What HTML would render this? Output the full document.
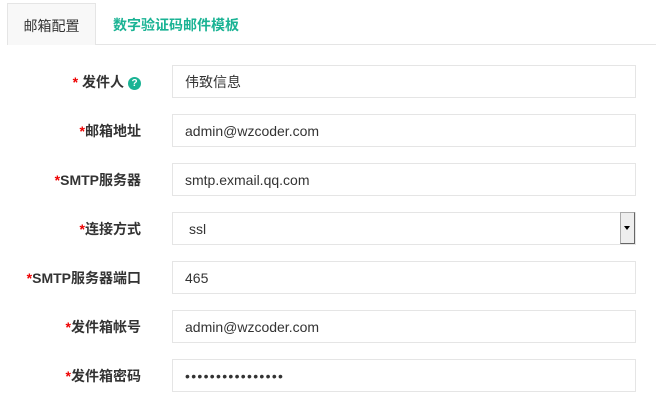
<!DOCTYPE html>
<html><head><meta charset="utf-8"><style>
body{margin:0;width:656px;height:404px;background:#fff;font-family:"Liberation Sans","Noto Sans CJK SC",sans-serif;position:relative;overflow:hidden}
.tabline{position:absolute;left:7px;right:0;top:44px;height:1px;background:#e5e5e5}
.tab1{position:absolute;left:7px;top:3px;width:87px;height:41px;border:1px solid #e5e5e5;border-bottom:none;background:#f8f8f8;font-size:14px;color:#333;line-height:44px;text-align:center}
.tab2{position:absolute;left:113px;top:3px;height:41px;line-height:44px;font-size:14px;color:#1ab394;font-weight:bold}
.lab{position:absolute;right:515px;font-size:14px;font-weight:bold;color:#333;line-height:35px;white-space:nowrap}
.lab i{color:#e00;font-style:normal}
.inp{position:absolute;left:172px;height:31px;border:1px solid #e5e5e5;font-size:14px;color:#333;line-height:33px;padding-left:12px;width:450px}
.q{display:inline-block;width:13px;height:13px;border-radius:50%;background:#1ab394;color:#fff;font-size:10px;line-height:13px;text-align:center;vertical-align:1px;margin-left:4px}
.arr{position:absolute;left:620px;top:212px;width:13px;height:30px;background:#eee;border:1px solid #aaa;border-right-color:#666;border-bottom-color:#666}
.arr:after{content:"";position:absolute;left:3px;top:13px;border-left:3px solid transparent;border-right:3px solid transparent;border-top:4px solid #000}
</style></head><body>
<div class="tabline"></div>
<div class="tab1">邮箱配置</div>
<div class="tab2">数字验证码邮件模板</div>

<div class="lab" style="top:65px"><i>*</i> 发件人<span class="q">?</span></div>
<div class="inp" style="top:65px">伟致信息</div>
<div class="lab" style="top:114px"><i>*</i>邮箱地址</div>
<div class="inp" style="top:114px">admin@wzcoder.com</div>
<div class="lab" style="top:163px"><i>*</i>SMTP服务器</div>
<div class="inp" style="top:163px">smtp.exmail.qq.com</div>
<div class="lab" style="top:212px"><i>*</i>连接方式</div>
<div class="inp" style="top:212px;padding-left:16px;width:446px">ssl</div>
<div class="arr"></div>
<div class="lab" style="top:261px"><i>*</i>SMTP服务器端口</div>
<div class="inp" style="top:261px">465</div>
<div class="lab" style="top:310px"><i>*</i>发件箱帐号</div>
<div class="inp" style="top:310px">admin@wzcoder.com</div>
<div class="lab" style="top:359px"><i>*</i>发件箱密码</div>
<div class="inp" style="top:359px;font-size:14px;letter-spacing:1.3px">••••••••••••••••</div>
</body></html>
